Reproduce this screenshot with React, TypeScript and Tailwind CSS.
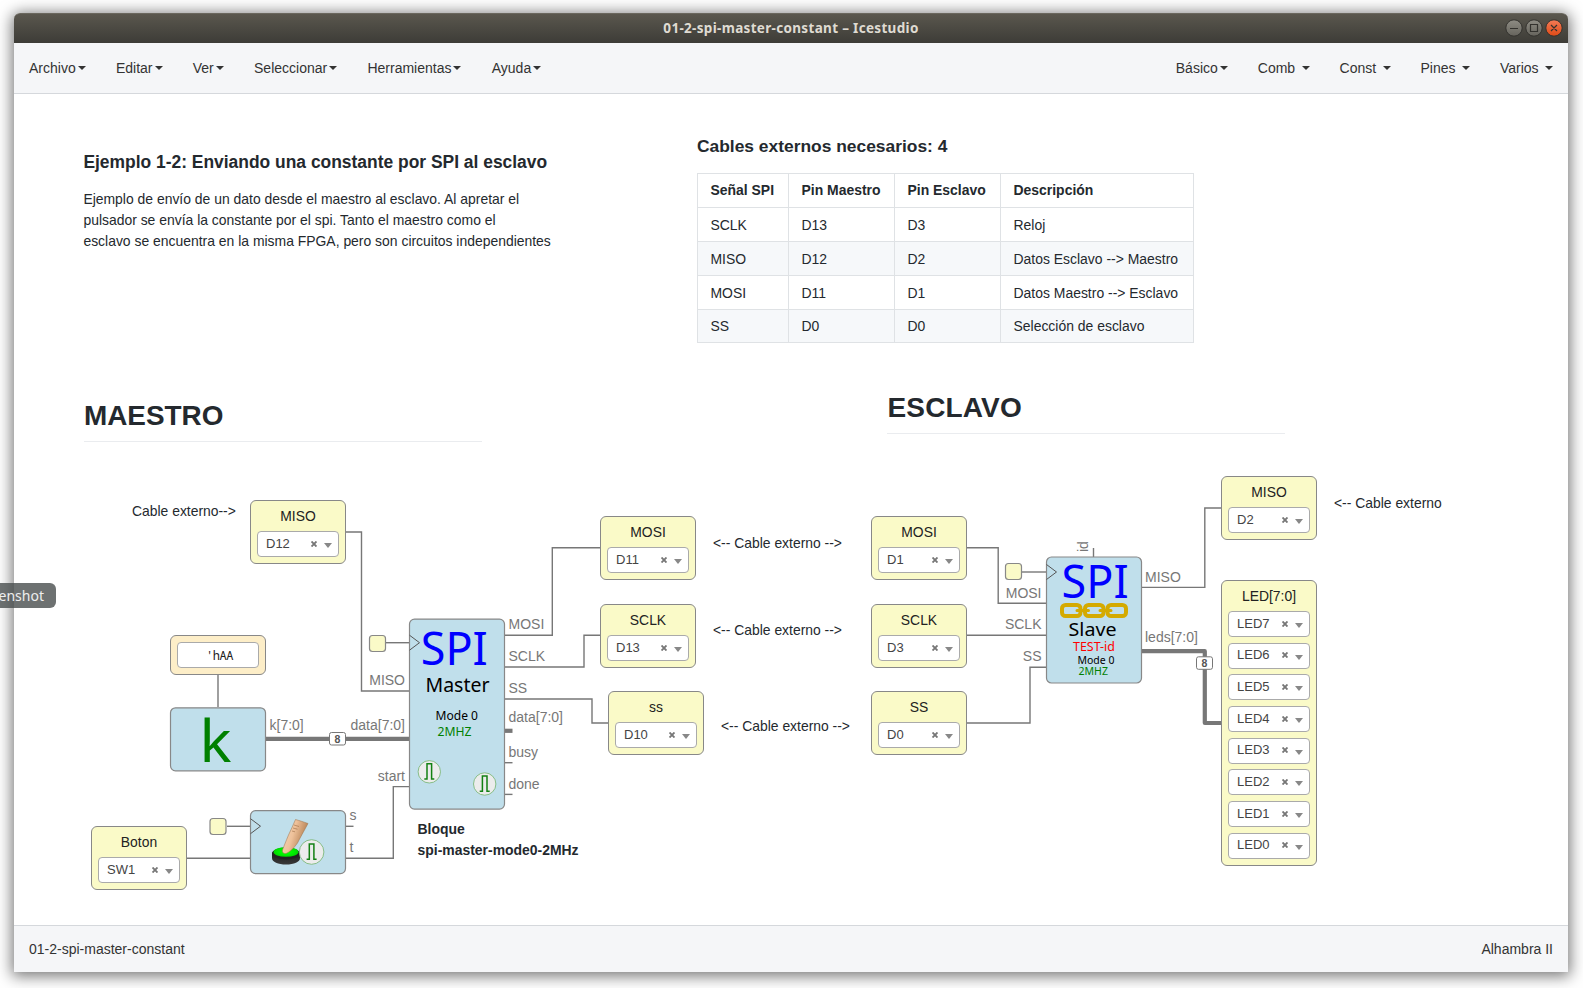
import type { ReactNode } from "react";

const ORIGIN_X = 14;
const ORIGIN_Y = 94;

function Caret() {
  return (
    <span className="ml-[2px] inline-block h-0 w-0 border-x-4 border-t-4 border-x-transparent border-t-[#333] align-middle" />
  );
}

function MenuItem({ label, spaced = false }: { label: string; spaced?: boolean }) {
  return (
    <div className="flex items-center px-[15px]">
      <span>{label}</span>
      {spaced && <span className="w-[4.4px]" />}
      <Caret />
    </div>
  );
}

function Placed({ x, y, className = "", children }: { x: number; y: number; className?: string; children?: ReactNode }) {
  return (
    <div className={`absolute ${className}`} style={{ left: x - ORIGIN_X, top: y - ORIGIN_Y }}>
      {children}
    </div>
  );
}

function PinSelect({ value }: { value: string }) {
  return (
    <div className="flex h-[26px] w-[82px] items-center rounded-[4px] border border-[#aaa] bg-white pl-2 text-[13px] leading-[22px] text-[#444]">
      <span className="flex-1 pb-px">{value}</span>
      <svg className="mr-[6px] mb-px h-[6px] w-[6px]" viewBox="0 0 6 6">
        <path d="M0.5 0.5L5.5 5.5M5.5 0.5L0.5 5.5" stroke="#777" strokeWidth="1.9" />
      </svg>
      <span className="mt-[3px] mr-[6px] ml-[1px] h-0 w-0 border-x-4 border-t-[5px] border-x-transparent border-t-[#888]" />
    </div>
  );
}

function PinBlock({ x, y, name, pins }: { x: number; y: number; name: string; pins: string[] }) {
  return (
    <Placed x={x} y={y} className="flex w-[96px] flex-col items-center rounded-[6px] border border-[#888] bg-[#fafac8] pb-[6px]">
      <div className="h-[30px] pt-[5px] text-[13.900px] leading-[20px] text-[#222]">{name}</div>
      <div className="flex flex-col gap-[5.7px]">
        {pins.map((p) => (
          <PinSelect key={p} value={p} />
        ))}
      </div>
    </Placed>
  );
}

const pinBlocks = [
  { x: 250, y: 500, name: "MISO", pins: ["D12"] },
  { x: 91, y: 826, name: "Boton", pins: ["SW1"] },
  { x: 600, y: 516, name: "MOSI", pins: ["D11"] },
  { x: 600, y: 604, name: "SCLK", pins: ["D13"] },
  { x: 608, y: 691, name: "ss", pins: ["D10"] },
  { x: 871, y: 516, name: "MOSI", pins: ["D1"] },
  { x: 871, y: 604, name: "SCLK", pins: ["D3"] },
  { x: 871, y: 691, name: "SS", pins: ["D0"] },
  { x: 1221, y: 476, name: "MISO", pins: ["D2"] },
  { x: 1221, y: 580, name: "LED[7:0]", pins: ["LED7", "LED6", "LED5", "LED4", "LED3", "LED2", "LED1", "LED0"] },
];

const notes = [
  { x: 132, y: 501, text: "Cable externo-->" },
  { x: 713, y: 533, text: "<-- Cable externo -->" },
  { x: 713, y: 620, text: "<-- Cable externo -->" },
  { x: 721, y: 716, text: "<-- Cable externo -->" },
  { x: 1334, y: 493, text: "<-- Cable externo" },
];

const wires = [
  "M346 532H361.5V691H409",
  "M505 635.3H552.3V547.7H600",
  "M505 667H584V635.2H600",
  "M505 699H592V723H608",
  "M505 762.7H512.5",
  "M505 794.4H512.5",
  "M386 642.7H409",
  "M409 786.6H393.3V858.3H346",
  "M346 826.3H353.5",
  "M187 858.3H250",
  "M227 826.3H250",
  "M218 675V707",
  "M967 547.8H998.2V603.3H1046",
  "M967 635.2H1046",
  "M967 723H1030V667.2H1046",
  "M1022 572H1046",
  "M1093.5 548V557",
  "M1142 587.4H1204.8V508H1221",
];

const buses = ["M505 730.8H512.5", "M266 738.8H409", "M1142 651.2H1204.8V723H1221"];

const chips = [
  { x: 170, y: 707.3, w: 96, h: 64 },
  { x: 250, y: 810.1, w: 96, h: 64 },
  { x: 409, y: 618.6, w: 96, h: 191 },
  { x: 1046, y: 556.5, w: 96, h: 127 },
];

const portLabels: { x: number; y: number; t: string; end?: boolean }[] = [
  { x: 508.5, y: 629, t: "MOSI" },
  { x: 508.5, y: 661, t: "SCLK" },
  { x: 508.5, y: 693, t: "SS" },
  { x: 508.5, y: 722, t: "data[7:0]" },
  { x: 508.5, y: 757, t: "busy" },
  { x: 508.5, y: 789, t: "done" },
  { x: 405, y: 685, t: "MISO", end: true },
  { x: 405, y: 730, t: "data[7:0]", end: true },
  { x: 405, y: 781, t: "start", end: true },
  { x: 269.5, y: 730, t: "k[7:0]" },
  { x: 349.5, y: 820, t: "s" },
  { x: 349.5, y: 852, t: "t" },
  { x: 1041.5, y: 598, t: "MOSI", end: true },
  { x: 1041.5, y: 629, t: "SCLK", end: true },
  { x: 1041.5, y: 661, t: "SS", end: true },
  { x: 1145, y: 582, t: "MISO" },
  { x: 1145, y: 642, t: "leds[7:0]" },
];

const chipTexts = [
  { x: 420.8, y: 664.5, size: 45, w: 67, fill: "#0000ff", t: "SPI" },
  { x: 425.5, y: 692, size: 19, w: 64, fill: "#000", t: "Master" },
  { x: 435.5, y: 720, size: 12.5, w: 42.5, fill: "#000", t: "Mode 0" },
  { x: 437.5, y: 735.8, size: 12.5, w: 34, fill: "#008000", t: "2MHZ" },
  { x: 1061.6, y: 597.5, size: 45, w: 67, fill: "#0000ff", t: "SPI" },
  { x: 1068.5, y: 636, size: 18.5, w: 48, fill: "#000", t: "Slave" },
  { x: 1073, y: 650.5, size: 12.5, w: 42, fill: "#ff0000", t: "TEST-id" },
  { x: 1077.5, y: 664, size: 11, w: 37, fill: "#000", t: "Mode 0" },
  { x: 1078.5, y: 675, size: 11, w: 29.5, fill: "#008000", t: "2MHZ" },
  { x: 199.5, y: 762, size: 59, w: 32, fill: "#008000", t: "k" },
];

const clocks = [
  { x: 369.5, y: 635.5, tx: 409.5, ty: 642.7 },
  { x: 210, y: 818.5, tx: 250.5, ty: 826.2 },
  { x: 1005.5, y: 563.5, tx: 1046.5, ty: 572 },
];

const pulses = [
  { x: 429.3, y: 771.8, r: 11.2 },
  { x: 484.7, y: 784, r: 11.2 },
  { x: 311.6, y: 852, r: 12.3 },
];

function Diagram() {
  return (
    <svg className="absolute top-0 left-0 h-[831px] w-[1554px]" viewBox="14 94 1554 831">
      <defs>
        <linearGradient id="skin" x1="0" y1="0" x2="1" y2="0.4">
          <stop offset="0" stopColor="#f7d9bd" />
          <stop offset="0.5" stopColor="#eec19a" />
          <stop offset="1" stopColor="#b07a4c" />
        </linearGradient>
        <linearGradient id="base" x1="0" y1="0" x2="0" y2="1">
          <stop offset="0" stopColor="#1a1a1a" />
          <stop offset="1" stopColor="#3a3a3a" />
        </linearGradient>
        <radialGradient id="cap">
          <stop offset="0.3" stopColor="#00ff00" />
          <stop offset="1" stopColor="#00d800" />
        </radialGradient>
      </defs>

      <g fill="none" stroke="#777" strokeWidth="1.4">
        {wires.map((d) => (
          <path key={d} d={d} />
        ))}
      </g>
      <g fill="none" stroke="#777" strokeWidth="4.2" strokeLinejoin="round">
        {buses.map((d) => (
          <path key={d} d={d} />
        ))}
      </g>

      {chips.map((c) => (
        <rect key={c.x} x={c.x + 0.5} y={c.y + 0.5} width={c.w - 1} height={c.h - 1} rx="5" fill="#c0dfeb" stroke="#888" strokeWidth="1.2" />
      ))}

      {clocks.map((c) => (
        <g key={c.x}>
          <rect x={c.x} y={c.y} width="16" height="16" rx="3" fill="#fafac8" stroke="#888" strokeWidth="1.2" />
          <path d={`M${c.tx} ${c.ty - 7.5}L${c.tx + 10} ${c.ty}L${c.tx} ${c.ty + 7.5}`} fill="none" stroke="#555" />
        </g>
      ))}

      {[
        { x: 329.5, y: 732.5 },
        { x: 1196.5, y: 656.8 },
      ].map((b) => (
        <g key={b.x}>
          <rect x={b.x} y={b.y} width="16" height="12.5" rx="2" fill="#fff" stroke="#777" />
          <text x={b.x + 8} y={b.y + 10} textAnchor="middle" fontSize="10.5" fontWeight="700" fill="#555">
            8
          </text>
        </g>
      ))}

      <g fontSize="14" fill="#777">
        {portLabels.map((l) => (
          <text key={`${l.x}-${l.y}`} x={l.x} y={l.y} textAnchor={l.end ? "end" : "start"}>
            {l.t}
          </text>
        ))}
        <text transform="translate(1087.5 552) rotate(-90)">id</text>
      </g>

      <g fontFamily="'Noto Sans', sans-serif">
        {chipTexts.map((c) => (
          <text key={`${c.x}-${c.y}`} x={c.x} y={c.y} fontSize={c.size} fill={c.fill} textLength={c.w} lengthAdjust="spacingAndGlyphs">
            {c.t}
          </text>
        ))}
      </g>

      <g fill="none" stroke="#d4aa00" strokeWidth="4">
        <rect x="1062" y="605" width="18.5" height="11" rx="3.5" />
        <rect x="1085" y="605" width="18.5" height="11" rx="3.5" />
        <rect x="1107.5" y="605" width="18.5" height="11" rx="3.5" />
        <path d="M1077 610.5H1088.5M1100 610.5H1111" strokeWidth="3" strokeLinecap="round" />
      </g>

      <g>
        <path d="M272 852.5V858C272 862 278 864.5 286 864.5C294 864.5 300 862 300 858V852.5Z" fill="url(#base)" />
        <ellipse cx="286" cy="853.5" rx="14" ry="6" fill="#222" />
        <ellipse cx="286" cy="852" rx="12.5" ry="4.8" fill="url(#cap)" />
        <path d="M295.5 819.5C299 820.5 304 822 308 823.5C304 831 300 838 297.5 843C294 848 290 852 286 853.5C283.5 854 282 852.5 282.5 850C284 846 286 841 288.5 835C291 829.5 293.5 824.5 295.5 819.5Z" fill="url(#skin)" stroke="#9a7048" strokeWidth="0.5" />
        <path d="M294 825L299 826.5M293 828L297.5 829.2M292 831L295 831.8" stroke="#a87950" strokeWidth="0.7" />
      </g>

      {pulses.map((p) => (
        <g key={p.x} transform={`translate(${p.x} ${p.y})`}>
          <circle r={p.r} fill="#ececec" stroke="#7cb87c" strokeWidth="0.9" />
          <path d="M-5 7.3H-2.3V-8H2.3V7.3H5" fill="none" stroke="#138013" strokeWidth="1.5" />
        </g>
      ))}
    </svg>
  );
}

const rows = [
  ["SCLK", "D13", "D3", "Reloj"],
  ["MISO", "D12", "D2", "Datos Esclavo --> Maestro"],
  ["MOSI", "D11", "D1", "Datos Maestro --> Esclavo"],
  ["SS", "D0", "D0", "Selección de esclavo"],
];

function SignalTable() {
  return (
    <table className="w-[496px] table-fixed border-collapse text-left text-[13.95px] leading-[20px]">
      <colgroup>
        <col className="w-[91px]" />
        <col className="w-[106px]" />
        <col className="w-[106px]" />
        <col className="w-[193px]" />
      </colgroup>
      <thead>
        <tr className="h-[34px]">
          {["Señal SPI", "Pin Maestro", "Pin Esclavo", "Descripción"].map((h) => (
            <th key={h} className="border border-[#dfe2e5] px-[12.5px] pb-px font-bold whitespace-nowrap">
              {h}
            </th>
          ))}
        </tr>
      </thead>
      <tbody>
        {rows.map((r) => (
          <tr key={r[0]} className="h-[34px] last:h-[33px] even:bg-[#f6f8fa]">
            {r.map((c, i) => (
              <td key={i} className="border border-[#dfe2e5] px-[12.5px] whitespace-nowrap">
                {c}
              </td>
            ))}
          </tr>
        ))}
      </tbody>
    </table>
  );
}

export default function App() {
  return (
    <div className="relative h-[988px] w-[1583px] overflow-hidden bg-white px-[14px] pt-[13px] font-['Liberation_Sans',Arial,sans-serif] text-sm text-[#24292e]">
      <div className="flex h-[959px] w-[1554px] flex-col rounded-t-[6px] bg-white shadow-[0_2px_15px_2px_rgba(0,0,0,0.55)]">
        <header className="relative flex h-[30px] shrink-0 items-center justify-center rounded-t-[6px] border-t border-[#6a675e] bg-linear-to-b from-[#5a574e] to-[#3d3c37]">
          <span className="font-['Noto_Sans',sans-serif] text-[13.5px] font-bold tracking-[0.32px] text-[#dfdbd2]">01-2-spi-master-constant – Icestudio</span>
          <svg className="absolute top-[5px] right-[4px] h-[18px] w-[60px]" viewBox="0 0 60 18">
            <defs>
              <linearGradient id="gray" x1="0" y1="0" x2="0" y2="1">
                <stop offset="0" stopColor="#8e8c84" />
                <stop offset="1" stopColor="#65635c" />
              </linearGradient>
              <linearGradient id="orange" x1="0" y1="0" x2="0" y2="1">
                <stop offset="0" stopColor="#f47b56" />
                <stop offset="1" stopColor="#df4a16" />
              </linearGradient>
            </defs>
            <g stroke="#33322e">
              <circle cx="10" cy="9" r="8.2" fill="url(#gray)" />
              <circle cx="30" cy="9" r="8.2" fill="url(#gray)" />
              <circle cx="50" cy="9" r="8.2" fill="url(#orange)" />
              <path d="M6 9.5H14M26.5 5.500H33.500V12.500H26.500ZM47 6L53 12M53 6L47 12" fill="none" strokeWidth="1.2" />
            </g>
          </svg>
        </header>

        <nav className="flex h-[51px] shrink-0 items-stretch justify-between border-b border-[#d5d8dc] bg-[#f5f6f8] text-[#333]">
          <div className="flex gap-[0.25px]">
            {["Archivo", "Editar", "Ver", "Seleccionar", "Herramientas", "Ayuda"].map((m) => (
              <MenuItem key={m} label={m} />
            ))}
          </div>
          <div className="flex">
            <MenuItem label="Básico" />
            {["Comb", "Const", "Pines", "Varios"].map((m) => (
              <MenuItem key={m} label={m} spaced />
            ))}
          </div>
        </nav>

        <main className="relative flex-1 overflow-hidden bg-white">
          <Placed x={83.4} y={151} className="w-[480px]">
            <h3 className="text-[17.43px] leading-[22px] font-bold whitespace-nowrap">Ejemplo 1-2: Enviando una constante por SPI al esclavo</h3>
            <p className="mt-[16px] text-[13.930px] leading-[21px] whitespace-pre">
              {"Ejemplo de envío de un dato desde el maestro al esclavo. Al apretar el\npulsador se envía la constante por el spi. Tanto el maestro como el\nesclavo se encuentra en la misma FPGA, pero son circuitos independientes"}
            </p>
          </Placed>

          <Placed x={697} y={135} className="w-[500px]">
            <h3 className="mb-[16px] text-[17.4px] leading-[22px] font-bold">Cables externos necesarios: 4</h3>
            <SignalTable />
          </Placed>

          <Placed x={84} y={399} className="w-[398px] border-b border-[#eaecef] pb-[8px]">
            <h1 className="text-[27.9px] leading-[34px] font-bold">MAESTRO</h1>
          </Placed>
          <Placed x={887} y={391} className="w-[398px] border-b border-[#eaecef] pb-[8px]">
            <h1 className="pl-[0.5px] text-[28px] leading-[34px] font-bold tracking-[0.15px]">ESCLAVO</h1>
          </Placed>

          <Diagram />

          {pinBlocks.map((b) => (
            <PinBlock key={`${b.x}-${b.y}`} {...b} />
          ))}

          <Placed x={170} y={635} className="flex h-[40px] w-[96px] items-center justify-center rounded-[6px] border border-[#888] bg-[#fdeec8]">
            <div className="flex h-[26px] w-[82px] items-center justify-center rounded-[4px] border border-[#aaa] bg-white pt-px pl-[3px] font-['Noto_Sans_Mono','DejaVu_Sans_Mono',monospace] text-[12px] tracking-[-0.5px] text-[#222]">
              'hAA
            </div>
          </Placed>

          {notes.map((n) => (
            <Placed key={`${n.x}-${n.y}`} x={n.x} y={n.y} className="text-[13.9px] leading-[20px] whitespace-nowrap">
              {n.text}
            </Placed>
          ))}

          <Placed x={417.5} y={819} className="text-[13.95px] leading-[21px] font-bold whitespace-nowrap">
            <p>Bloque</p>
            <p>spi-master-mode0-2MHz</p>
          </Placed>
        </main>

        <footer className="flex h-[47px] shrink-0 items-center justify-between border-t border-[#d5d8dc] bg-[#f5f6f8] px-[15px] pb-px text-[#333]">
          <span>01-2-spi-master-constant</span>
          <span>Alhambra II</span>
        </footer>
      </div>

      <div className="absolute top-[583px] left-0 flex h-[25px] w-[56px] items-center justify-end rounded-r-[6px] bg-[rgba(72,77,78,0.8)] pr-[12px] font-['Noto_Sans',sans-serif] text-[14px] text-[#eee]">
        enshot
      </div>
    </div>
  );
}
